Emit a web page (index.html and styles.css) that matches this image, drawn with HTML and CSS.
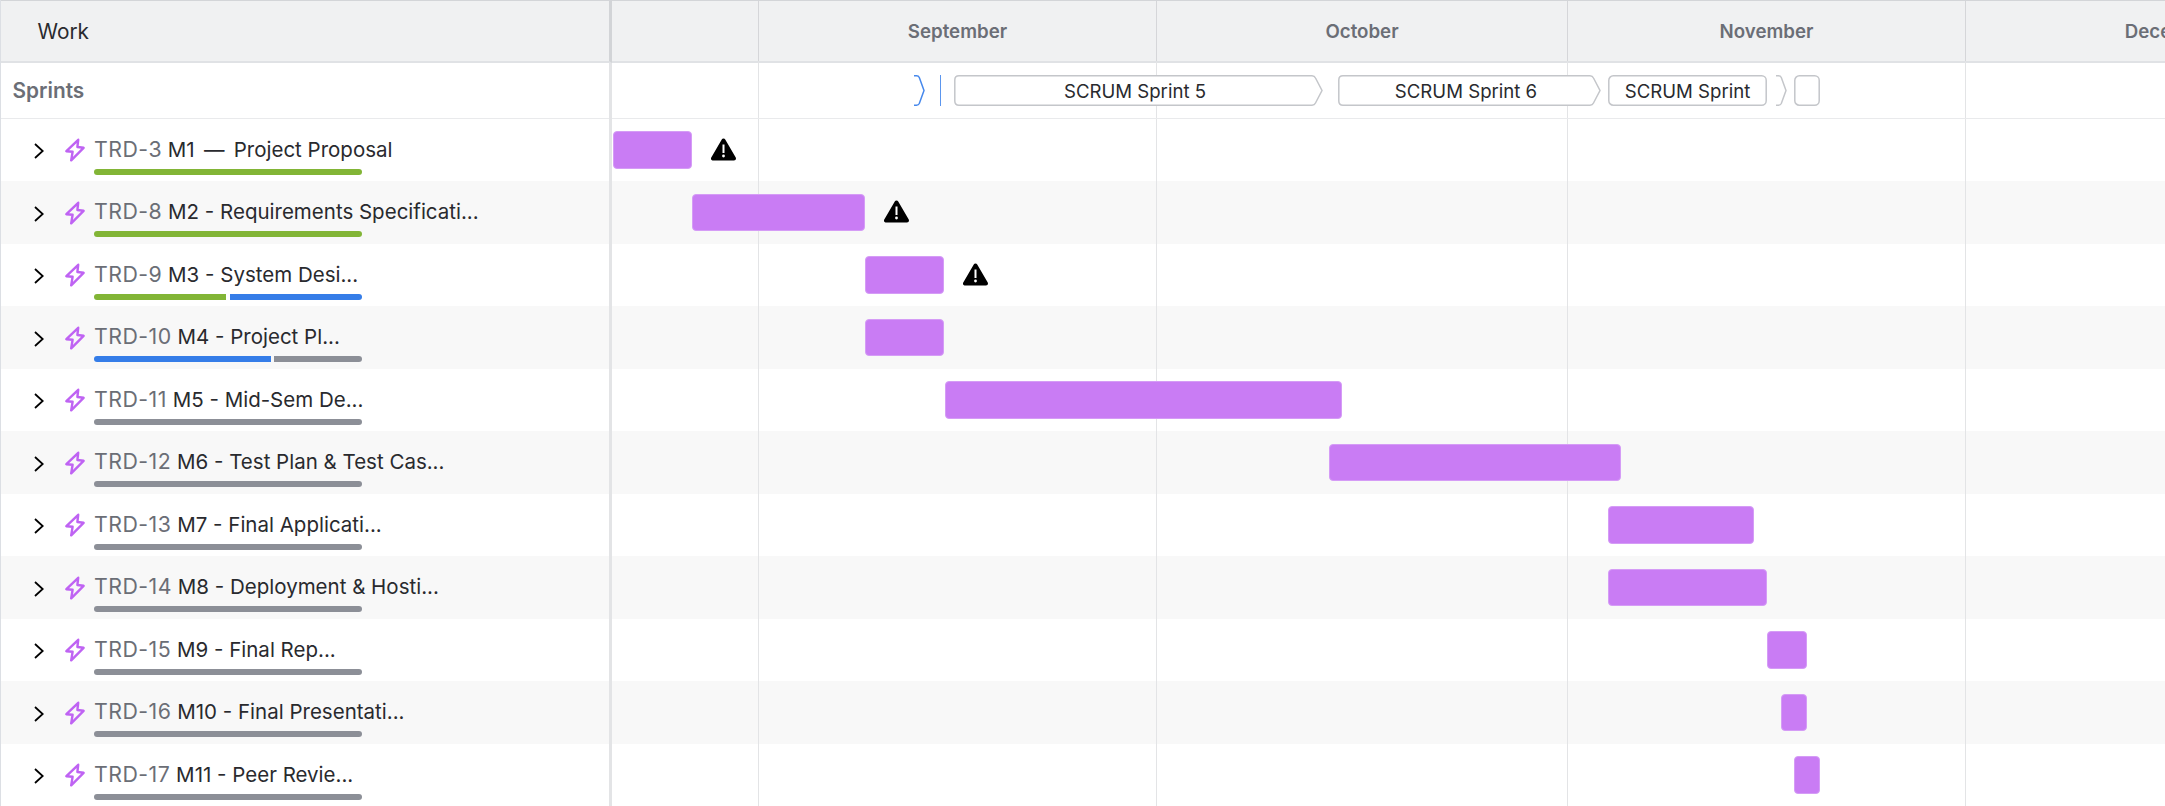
FILE: index.html
```html
<!DOCTYPE html>
<html lang="en">
<head>
<meta charset="utf-8">
<title>Timeline</title>
<link rel="stylesheet" href="styles.css">
</head>
<body>
<svg class="defs" width="0" height="0" aria-hidden="true">
  <symbol id="chev" viewBox="0 0 10 16"><polyline points="1,1 8.7,8 1,15" fill="none" stroke="#000" stroke-width="1.8"/></symbol>
  <symbol id="bolt" viewBox="0 0 20 24"><path d="M13.2 1.8 1.4 13.2l6.2.6-1.4 8.6L18.6 9.8l-6.2-.8z" fill="none" stroke="#bf63f3" stroke-width="2.4" stroke-linejoin="round"/></symbol>
  <symbol id="warn" viewBox="0 0 25 23"><path d="M12.5 2.500 2 20.500h21z" fill="#000" stroke="#000" stroke-width="4" stroke-linejoin="round"/><rect x="11.500" y="6.500" width="2" height="8.500" fill="#fff"/><circle cx="12.500" cy="18" r="1.400" fill="#fff"/></symbol>
</svg>
<main class="gantt">
  <section class="pane">
    <div class="pane-head">Work</div>
    <div class="pane-sprints">Sprints</div>
    <div class="item">
      <svg class="chev"><use href="#chev"/></svg><svg class="bolt"><use href="#bolt"/></svg>
      <div class="info"><div class="title"><span class="key">TRD-3</span> M1 <span class="dash">—</span> Project Proposal</div>
      <div class="progress"><i class="seg done" style="width:268px"></i></div></div>
    </div>
    <div class="item">
      <svg class="chev"><use href="#chev"/></svg><svg class="bolt"><use href="#bolt"/></svg>
      <div class="info"><div class="title"><span class="key">TRD-8</span> M2 - Requirements Specificati...</div>
      <div class="progress"><i class="seg done" style="width:268px"></i></div></div>
    </div>
    <div class="item">
      <svg class="chev"><use href="#chev"/></svg><svg class="bolt"><use href="#bolt"/></svg>
      <div class="info"><div class="title"><span class="key">TRD-9</span> M3 - System Desi...</div>
      <div class="progress"><i class="seg done" style="width:132px"></i><i class="seg doing" style="width:132px"></i></div></div>
    </div>
    <div class="item">
      <svg class="chev"><use href="#chev"/></svg><svg class="bolt"><use href="#bolt"/></svg>
      <div class="info"><div class="title"><span class="key">TRD-10</span> M4 - Project Pl...</div>
      <div class="progress"><i class="seg doing" style="width:177px"></i><i class="seg todo" style="width:88px"></i></div></div>
    </div>
    <div class="item">
      <svg class="chev"><use href="#chev"/></svg><svg class="bolt"><use href="#bolt"/></svg>
      <div class="info"><div class="title"><span class="key">TRD-11</span> M5 - Mid-Sem De...</div>
      <div class="progress"><i class="seg todo" style="width:268px"></i></div></div>
    </div>
    <div class="item">
      <svg class="chev"><use href="#chev"/></svg><svg class="bolt"><use href="#bolt"/></svg>
      <div class="info"><div class="title"><span class="key">TRD-12</span> M6 - Test Plan &amp; Test Cas...</div>
      <div class="progress"><i class="seg todo" style="width:268px"></i></div></div>
    </div>
    <div class="item">
      <svg class="chev"><use href="#chev"/></svg><svg class="bolt"><use href="#bolt"/></svg>
      <div class="info"><div class="title"><span class="key">TRD-13</span> M7 - Final Applicati...</div>
      <div class="progress"><i class="seg todo" style="width:268px"></i></div></div>
    </div>
    <div class="item">
      <svg class="chev"><use href="#chev"/></svg><svg class="bolt"><use href="#bolt"/></svg>
      <div class="info"><div class="title"><span class="key">TRD-14</span> M8 - Deployment &amp; Hosti...</div>
      <div class="progress"><i class="seg todo" style="width:268px"></i></div></div>
    </div>
    <div class="item">
      <svg class="chev"><use href="#chev"/></svg><svg class="bolt"><use href="#bolt"/></svg>
      <div class="info"><div class="title"><span class="key">TRD-15</span> M9 - Final Rep...</div>
      <div class="progress"><i class="seg todo" style="width:268px"></i></div></div>
    </div>
    <div class="item">
      <svg class="chev"><use href="#chev"/></svg><svg class="bolt"><use href="#bolt"/></svg>
      <div class="info"><div class="title"><span class="key">TRD-16</span> M10 - Final Presentati...</div>
      <div class="progress"><i class="seg todo" style="width:268px"></i></div></div>
    </div>
    <div class="item">
      <svg class="chev"><use href="#chev"/></svg><svg class="bolt"><use href="#bolt"/></svg>
      <div class="info"><div class="title"><span class="key">TRD-17</span> M11 - Peer Revie...</div>
      <div class="progress"><i class="seg todo" style="width:268px"></i></div></div>
    </div>
  </section>

  <section class="timeline">
    <div class="months">
      <div class="month" style="width:147px"></div>
      <div class="month" style="width:398px">September</div>
      <div class="month" style="width:411px">October</div>
      <div class="month" style="width:398px">November</div>
      <div class="month" style="width:412px">December</div>
    </div>
    <div class="sprints">
      <svg class="sprint-mark" style="left:302px" width="11" height="31" viewBox="0 0 11 31"><path d="M0 .8h2.500Q4.500.8 5.300 2.500L10 15.500 5.300 28.500Q4.500 30.200 2.500 30.200H0" fill="none" stroke="#4688ec" stroke-width="1.500"/></svg>
      <div class="sprint-line"></div>
      <div class="sprint sprint-arrow" style="left:342px;width:369px">
        <svg width="369" height="31" viewBox="0 0 369 31"><path d="M5 .8H358Q360.500.8 361.500 3L368 15.500 361.500 28Q360.500 30.200 358 30.200H5Q.8 30.200.8 26V5Q.8.8 5 .8Z" fill="#fff" stroke="#c4c6ca" stroke-width="1.500"/></svg>
        <span class="sprint-name">SCRUM Sprint 5</span>
      </div>
      <div class="sprint sprint-arrow" style="left:726px;width:263px">
        <svg width="263" height="31" viewBox="0 0 263 31"><path d="M5 .8H252Q254.500.8 255.500 3L262 15.500 255.500 28Q254.500 30.200 252 30.200H5Q.8 30.200.8 26V5Q.8.8 5 .8Z" fill="#fff" stroke="#c4c6ca" stroke-width="1.500"/></svg>
        <span class="sprint-name">SCRUM Sprint 6</span>
      </div>
      <div class="sprint" style="left:996px;width:159px">
        <svg width="159" height="31" viewBox="0 0 159 31"><rect x=".8" y=".8" width="157.400" height="29.400" rx="4.500" fill="#fff" stroke="#c4c6ca" stroke-width="1.500"/></svg>
        <span class="sprint-name">SCRUM Sprint</span>
      </div>
      <svg class="sprint-mark" style="left:1164px" width="11" height="31" viewBox="0 0 11 31"><path d="M0 .8h2.500Q4.500.8 5.300 2.500L10 15.500 5.300 28.500Q4.500 30.200 2.500 30.200H0" fill="#fff" stroke="#c4c6ca" stroke-width="1.500"/></svg>
      <div class="sprint" style="left:1182px;width:26px">
        <svg width="26" height="31" viewBox="0 0 26 31"><rect x=".8" y=".8" width="24.400" height="29.400" rx="4.500" fill="#fff" stroke="#c4c6ca" stroke-width="1.500"/></svg>
      </div>
    </div>
    <div class="track"><div class="bar" style="margin-left:1px;width:79px"></div><svg class="warn"><use href="#warn"/></svg></div>
    <div class="track"><div class="bar" style="margin-left:80px;width:173px"></div><svg class="warn"><use href="#warn"/></svg></div>
    <div class="track"><div class="bar" style="margin-left:253px;width:79px"></div><svg class="warn"><use href="#warn"/></svg></div>
    <div class="track"><div class="bar" style="margin-left:253px;width:79px"></div></div>
    <div class="track"><div class="bar" style="margin-left:333px;width:397px"></div></div>
    <div class="track"><div class="bar" style="margin-left:717px;width:292px"></div></div>
    <div class="track"><div class="bar" style="margin-left:996px;width:146px"></div></div>
    <div class="track"><div class="bar" style="margin-left:996px;width:159px"></div></div>
    <div class="track"><div class="bar" style="margin-left:1155px;width:40px"></div></div>
    <div class="track"><div class="bar" style="margin-left:1169px;width:26px"></div></div>
    <div class="track"><div class="bar" style="margin-left:1182px;width:26px"></div></div>
    <div class="rule" style="left:146px"></div>
    <div class="rule" style="left:544px"></div>
    <div class="rule" style="left:955px"></div>
    <div class="rule" style="left:1353px"></div>
  </section>
</main>
</body>
</html>
```

FILE: styles.css
```css
* { box-sizing: border-box; }

html, body {
  margin: 0;
  height: 100%;
  overflow: hidden;
  background: #fff;
}

body {
  font-family: Inter, "Liberation Sans", sans-serif;
  color: #292a2e;
}

.defs { position: absolute; }

.gantt {
  display: flex;
  width: 2165px;
  height: 806px;
  overflow: hidden;
}

.pane {
  flex: 0 0 612px;
  border-left: 1px solid #dcdfe4;
  border-right: 3px solid #e3e4e6;
}

.pane-head {
  height: 62.5px;
  margin-right: -3px;
  padding: 19px 0 0 36.5px;
  font-size: 20.8px;
  line-height: 24px;
  background: #f0f1f2;
  border-top: 1px solid #d3d5d8;
  border-right: 3px solid #d2d4d7;
  border-bottom: 2px solid #e0e2e5;
}

.pane-sprints {
  height: 56px;
  padding: 2px 0 0 11.5px;
  font-size: 20.8px;
  font-weight: 600;
  line-height: 42px;
  color: #6b6e76;
  border-bottom: 1.5px solid #e9eaec;
  display: flex;
  align-items: center;
}

.item {
  display: flex;
  align-items: flex-start;
  height: 62.5px;
  padding-left: 32.5px;
}

.item:nth-child(even) { background: #f8f8f8; }

.chev {
  flex: none;
  width: 10px;
  height: 16px;
  margin-top: 24.5px;
}

.bolt {
  flex: none;
  width: 20px;
  height: 24px;
  margin: 19.5px 0 0 21.5px;
}

.info {
  margin-left: 9px;
  width: 268px;
}

.title {
  margin-top: 18.4px;
  font-size: 20.5px;
  line-height: 25px;
  white-space: nowrap;
}

.key {
  color: #6b6e76;
  font-size: 21.3px;
  letter-spacing: .5px;
}

.dash { padding: 0 3.5px; }

.progress {
  display: flex;
  justify-content: space-between;
  height: 6px;
  margin-top: 7.1px;
}

.seg { display: block; height: 6px; }
.seg:first-child { border-top-left-radius: 3px; border-bottom-left-radius: 3px; }
.seg:last-child { border-top-right-radius: 3px; border-bottom-right-radius: 3px; }
.done { background: #82b536; }
.doing { background: #357de8; }
.todo { background: #8c8f97; }

.timeline {
  position: relative;
  flex: 0 0 1766px;
}

.months {
  display: flex;
  height: 62.5px;
  background: #f0f1f2;
  border-top: 1px solid #d3d5d8;
  border-bottom: 2px solid #e0e2e5;
}

.month {
  flex: none;
  height: 100%;
  border-right: 1px solid #d5d6d9;
  text-align: center;
  font-size: 18.7px;
  font-weight: 600;
  line-height: 62px;
  color: #6b6e76;
  white-space: nowrap;
}

.sprints {
  position: relative;
  z-index: 2;
  height: 56px;
  border-bottom: 1.5px solid #e9eaec;
}

.sprint {
  position: absolute;
  top: 12px;
  height: 31px;
}

.sprint svg { display: block; }

.sprint-name {
  position: absolute;
  inset: 0;
  text-align: center;
  font-size: 18.6px;
  line-height: 32px;
  white-space: nowrap;
}

.sprint-arrow .sprint-name { right: 7px; }

.sprint-mark {
  position: absolute;
  top: 12px;
}

.sprint-line {
  position: absolute;
  left: 328px;
  top: 12px;
  width: 1px;
  height: 31px;
  background: #5b96ee;
}

.track {
  display: flex;
  align-items: center;
  height: 62.5px;
}

.track:nth-child(even) { background: #f8f8f8; }

.bar {
  position: relative;
  z-index: 2;
  flex: none;
  height: 37.5px;
  background: #c97cf4;
  border: 1px solid #d59cf6;
  border-radius: 4px;
}

.warn {
  position: relative;
  z-index: 2;
  flex: none;
  width: 25px;
  height: 23px;
  margin: 0 0 1px 19px;
}

.rule {
  position: absolute;
  z-index: 1;
  top: 62px;
  bottom: 0;
  width: 1px;
  background: #e3e4e6;
}
```
